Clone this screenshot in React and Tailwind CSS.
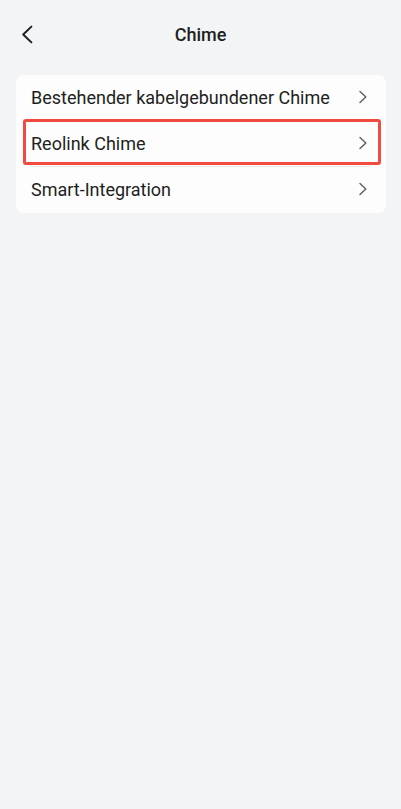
const items = ['Bestehender kabelgebundener Chime', 'Reolink Chime', 'Smart-Integration'];

function Chevron() {
  return (
    <svg className="mb-0.5 h-4 w-4 shrink-0 text-[#606265]" viewBox="0 0 16 16" fill="none" stroke="currentColor" strokeWidth="1.5" strokeLinecap="round" strokeLinejoin="round" aria-hidden="true">
      <path d="M5 2.5 10.8 8 5 13.5" />
    </svg>
  );
}

export default function App() {
  return (
    <div className="min-h-screen bg-[#f2f4f6] font-['Roboto',sans-serif] text-[#1e1f21]">
      <header className="grid h-[75px] grid-cols-[40px_1fr_40px] items-center px-2 pb-2">
        <button type="button" aria-label="Zurück" className="flex h-10 w-10 items-center justify-center">
          <svg className="h-6 w-6" viewBox="0 0 24 24" fill="none" stroke="currentColor" strokeWidth="2" strokeLinecap="round" strokeLinejoin="round" aria-hidden="true">
            <path d="M15.4 4.6 7.2 12.5l8.2 7.9" />
          </svg>
        </button>
        <h1 className="pt-0.5 text-center text-lg font-medium">Chime</h1>
      </header>
      <main className="pr-[15px] pl-4">
        <ul className="relative rounded-lg bg-[#fdfdfd]">
          {items.map((item, index) => (
            <li key={item}>
              <button type="button" className="flex h-[46px] w-full items-center justify-between px-[15px] text-left text-lg">
                <span>{item}</span>
                <Chevron />
              </button>
              {index === 1 && <div className="mx-[15px] -mt-px h-px bg-[#eaebee]" />}
            </li>
          ))}
          <li aria-hidden="true" className="pointer-events-none absolute right-[5px] left-[7px] top-[44px] h-[46px] rounded-[3px] border-3 border-[#f04a41]" />
        </ul>
      </main>
    </div>
  );
}
